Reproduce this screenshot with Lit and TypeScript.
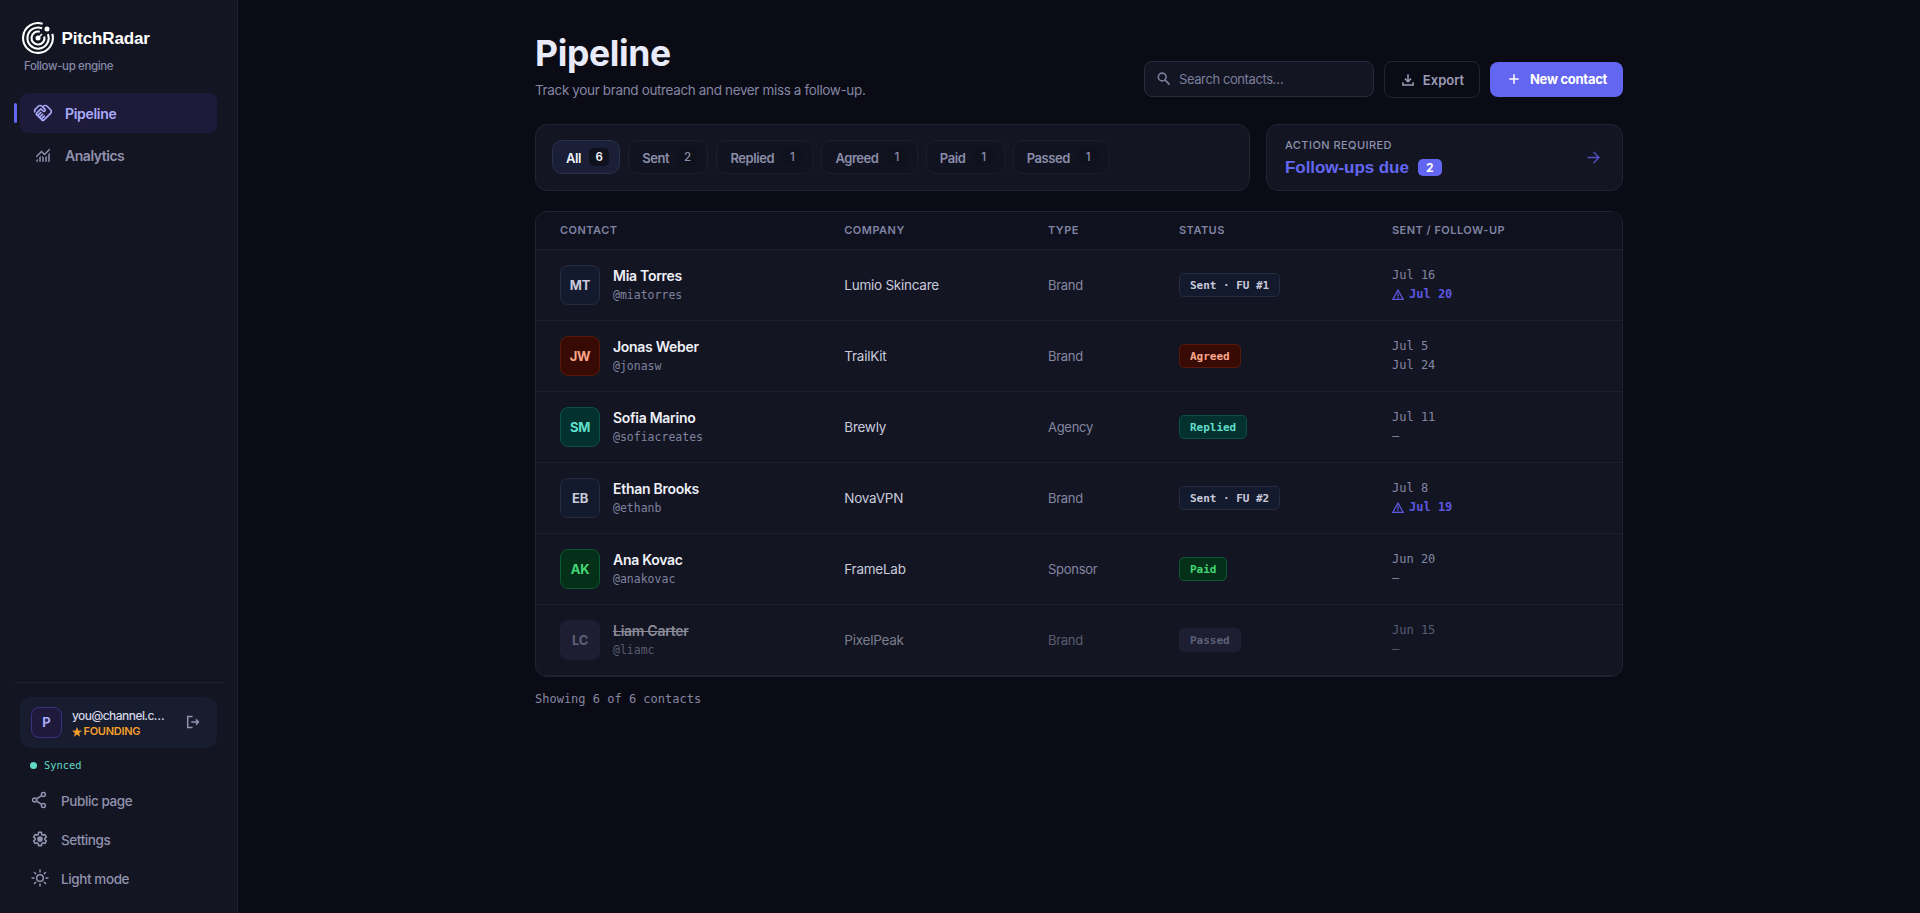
import { LitElement, html, css, svg, nothing, TemplateResult } from 'lit';
import { customElement, state } from 'lit/decorators.js';
import { classMap } from 'lit/directives/class-map.js';

type Tone = 'sent' | 'agreed' | 'replied' | 'paid' | 'passed';

interface Contact {
  initials: string;
  name: string;
  handle: string;
  company: string;
  type: string;
  status: string;
  tone: Tone;
  sent: string;
  followUp: string;
  due?: boolean;
}

const CONTACTS: Contact[] = [
  { initials: 'MT', name: 'Mia Torres', handle: '@miatorres', company: 'Lumio Skincare', type: 'Brand', status: 'Sent · FU #1', tone: 'sent', sent: 'Jul 16', followUp: 'Jul 20', due: true },
  { initials: 'JW', name: 'Jonas Weber', handle: '@jonasw', company: 'TrailKit', type: 'Brand', status: 'Agreed', tone: 'agreed', sent: 'Jul 5', followUp: 'Jul 24' },
  { initials: 'SM', name: 'Sofia Marino', handle: '@sofiacreates', company: 'Brewly', type: 'Agency', status: 'Replied', tone: 'replied', sent: 'Jul 11', followUp: '—' },
  { initials: 'EB', name: 'Ethan Brooks', handle: '@ethanb', company: 'NovaVPN', type: 'Brand', status: 'Sent · FU #2', tone: 'sent', sent: 'Jul 8', followUp: 'Jul 19', due: true },
  { initials: 'AK', name: 'Ana Kovac', handle: '@anakovac', company: 'FrameLab', type: 'Sponsor', status: 'Paid', tone: 'paid', sent: 'Jun 20', followUp: '—' },
  { initials: 'LC', name: 'Liam Carter', handle: '@liamc', company: 'PixelPeak', type: 'Brand', status: 'Passed', tone: 'passed', sent: 'Jun 15', followUp: '—' },
];

const FILTERS: [string, number][] = [['All', 6], ['Sent', 2], ['Replied', 1], ['Agreed', 1], ['Paid', 1], ['Passed', 1]];

const icon = (size: number, box: string, body: TemplateResult) =>
  html`<svg width=${size} height=${size} viewBox=${box} fill="none" stroke="none" aria-hidden="true">${body}</svg>`;

const handshake = icon(20, '0 0 24 24', svg`<path fill="currentColor" d="M12.22 19.85c-.18.18-.5.21-.71 0-.18-.18-.21-.5 0-.71l3.39-3.39-1.41-1.41-3.39 3.39c-.19.2-.51.19-.71 0-.21-.21-.18-.53 0-.71l3.39-3.39-1.41-1.41-3.39 3.39c-.18.18-.5.21-.71 0-.19-.19-.19-.51 0-.71l3.39-3.39-1.42-1.41-3.39 3.39c-.18.18-.5.21-.71 0-.19-.2-.19-.51 0-.71L9.52 8.4l1.87 1.86c.95.95 2.59.94 3.54 0 .98-.98.98-2.56 0-3.54l-1.86-1.86.28-.28c.78-.78 2.05-.78 2.83 0l4.24 4.24c.78.78.78 2.05 0 2.83l-8.2 8.2zm9.61-6.78c1.56-1.56 1.56-4.09 0-5.66l-4.24-4.24c-1.56-1.56-4.09-1.56-5.66 0l-.28.28-.28-.28c-1.56-1.56-4.09-1.56-5.66 0L2.17 6.71C.75 8.13.62 10.34 1.77 11.9l1.45-1.45c-.39-.75-.26-1.7.37-2.33l3.54-3.54c.78-.78 2.05-.78 2.83 0l3.56 3.56c.18.18.21.5 0 .71-.21.21-.53.18-.71 0L9.52 5.57l-5.8 5.79c-.98.97-.98 2.56 0 3.54.39.39.89.63 1.42.7.07.52.3 1.02.7 1.42.4.4.9.63 1.42.7.07.52.3 1.02.7 1.42.4.4.9.63 1.42.7.07.54.31 1.03.7 1.42.47.47 1.1.73 1.77.73.67 0 1.3-.26 1.77-.73l8.21-8.19z"/>`);
const chart = icon(18, '0 -960 960 960', svg`<path fill="currentColor" d="M120-120v-80l80-80v160h-80Zm160 0v-240l80-80v320h-80Zm160 0v-320l80 81v239h-80Zm160 0v-239l80-80v319h-80Zm160 0v-400l80-80v480h-80ZM120-327v-113l280-280 160 160 280-280v113L560-447 400-607 120-327Z"/>`);
const share = icon(18, '0 0 18 18', svg`<g stroke="currentColor" stroke-width="1.5"><circle cx="3.6" cy="9" r="2"/><circle cx="12.4" cy="3.6" r="2"/><circle cx="12.4" cy="14.4" r="2"/><path d="M5.400 8l5.300-3.300M5.400 10l5.300 3.300"/></g>`);
const gear = icon(18, '0 0 24 24', svg`<path stroke="currentColor" stroke-width="2.1" stroke-linejoin="round" d="M18.4 12.9c.1-.6.1-1.2 0-1.8l2.1-1.6-2-3.5-2.5 1c-.5-.4-1-.7-1.6-.9L14 3.2h-4l-.4 2.9c-.6.2-1.100.5-1.600.9l-2.500-1-2 3.500 2.100 1.600c-.1.600-.1 1.200 0 1.800l-2.100 1.600 2 3.500 2.500-1c.5.4 1 .7 1.600.9l.4 2.900h4l.4-2.900c.6-.2 1.100-.5 1.600-.9l2.500 1 2-3.500z"/><circle cx="12" cy="12" r="3.800" fill="currentColor"/>`);
const sun = icon(18, '0 0 18 18', svg`<g stroke="currentColor" stroke-width="1.5" stroke-linecap="round"><circle cx="9" cy="9" r="3.300"/><path d="M9 1.100v2M9 14.900v2M1.100 9h2M14.900 9h2M3.500 3.500l1.200 1.200M13.300 13.300l1.200 1.200M3.500 14.500l1.200-1.200M13.300 4.700l1.200-1.200"/></g>`);
const logout = icon(14, '0 0 14 14', svg`<path stroke="currentColor" stroke-width="1.500" d="M6.500 1.600H1.700v10.800h4.800M5.300 7h7M9.900 4.400L12.500 7l-2.600 2.600"/>`);
const magnifier = icon(14, '0 0 14 14', svg`<g stroke="currentColor" stroke-width="1.600"><circle cx="5.200" cy="5" r="3.900"/><path d="M8 7.900l4.600 4.700"/></g>`);
const download = icon(12, '0 0 12 12', svg`<path stroke="currentColor" stroke-width="1.500" d="M6 .3v7M2.900 4.600L6 7.700l3.100-3.100M.9 8.300v2.600h10.200V8.300"/>`);
const plus = icon(10, '0 0 10 10', svg`<path stroke="currentColor" stroke-width="1.500" d="M5 .3v9.400M.3 5h9.400"/>`);
const arrow = icon(13, '0 0 13 13', svg`<path stroke="currentColor" stroke-width="1.400" d="M.5 6.500h11.300M6.500 1l5.500 5.500L6.500 12"/>`);
const star = icon(10, '0 0 24 24', svg`<path fill="currentColor" d="M12 0l3.200 8.300 8.800.5-6.900 5.600 2.300 8.700L12 18.200l-7.400 4.900 2.300-8.700L0 8.800l8.800-.5z"/>`);
const warning = icon(12, '0 0 12 12', svg`<path stroke="currentColor" stroke-width="1.300" d="M6 1l5.100 9.300H.9zM6 4.300v3.100M6 8v1.200"/>`);
const radar = html`<svg class="radar" width="32" height="32" viewBox="0 0 32 32" fill="none" aria-hidden="true">
  <g stroke="#fff" stroke-width="2.100">
    <path d="M20.600 1.850A14.900 14.900 0 1 0 30.300 11.900"/>
    <path d="M20.100 6.300A10.600 10.600 0 1 0 25.900 12.200"/>
    <path d="M17.800 9.800A6.500 6.500 0 1 0 22.300 14.400"/>
    <path d="M17 15L20 12" stroke-width="1.500"/>
  </g>
  <circle cx="16" cy="16" r="2.500" fill="#fff"/>
  <circle cx="25" cy="7" r="2.500" fill="#fff"/>
</svg>`;

@customElement('pr-sidebar')
class Sidebar extends LitElement {
  static styles = css`
    :host {
      display: flex; flex-direction: column; box-sizing: border-box; width: 238px; height: 913px;
      padding: 22px 12px 15px 12px; background: #131522; border-right: 1px solid #222434;
      font-family: Inter, sans-serif; color: #9092ae;
    }
    svg { display: block; flex: none; }
    .brand { display: flex; align-items: center; gap: 7.500px; padding-left: 10px; height: 32px; }
    .word { padding-top: 1.500px; font: 700 17px/32px 'Liberation Sans', sans-serif; letter-spacing: -0.16px; color: #fff; }
    .tag { padding-left: 12px; margin-top: 4px; font-size: 11.5px; line-height: 17px; font-weight: 450; letter-spacing: -0.37px; color: #8588a8; }
    nav { display: flex; flex-direction: column; gap: 2px; margin: 18px 8px 0; }
    .item { position: relative; display: flex; align-items: center; box-sizing: border-box; height: 40px; border-radius: 8px; padding-left: 13px; font-size: 14px; font-weight: 600; letter-spacing: -0.46px; }
    .item .ico { display: flex; justify-content: center; width: 20px; margin-right: 12px; }
    .item.on { background: #1e1a3a; color: #a9abfa; letter-spacing: -0.3px; }
    .item.on::before { content: ''; position: absolute; left: -6px; top: 10px; width: 3px; height: 20px; border-radius: 2px; background: #6366f1; }
    .rule { margin: auto 1px 0 2px; height: 1px; background: #1f2131; }
    .foot { padding: 14px 8px 0; }
    .user { display: flex; align-items: center; height: 51px; border-radius: 11px; background: #181c2f; padding: 0 17px 0 11px; }
    .avatar { box-sizing: border-box; width: 31px; height: 31px; border: 1px solid #3a3080; border-radius: 8px; background: #1f1a3b; color: #a9abfa; display: grid; place-items: center; font-size: 13px; font-weight: 700; }
    .who { margin-left: 10px; padding-top: 3px; flex: 1; min-width: 0; }
    .mail { font-size: 12px; line-height: 16px; font-weight: 500; letter-spacing: -0.55px; color: #d3d5e6; white-space: nowrap; }
    .plan { display: flex; align-items: center; gap: 1.500px; font-size: 11px; line-height: 15px; font-weight: 600; letter-spacing: -0.28px; color: #f59e2b; }
    .sync { display: flex; align-items: center; gap: 7px; padding-left: 10px; height: 16px; margin: 9.500px 0 8px; font: 400 10.4px/16px 'DejaVu Sans Mono', monospace; color: #5fd9c4; }
    .dot { width: 7px; height: 7px; border-radius: 50%; background: #5fd9c4; }
    .link { display: flex; align-items: center; gap: 12.500px; height: 39px; padding-left: 10.5px; font-size: 13.5px; font-weight: 450; letter-spacing: -0.4px; }
    .link svg { margin-bottom: 1px; }
    .link span { padding-top: 1px; }
  `;
  render() {
    return html`
      <div class="brand">${radar}<span class="word">PitchRadar</span></div>
      <div class="tag">Follow-up engine</div>
      <nav>
        <div class="item on"><span class="ico">${handshake}</span>Pipeline</div>
        <div class="item"><span class="ico">${chart}</span>Analytics</div>
      </nav>
      <div class="rule"></div>
      <div class="foot">
        <div class="user">
          <div class="avatar">P</div>
          <div class="who"><div class="mail">you@channel.c…</div><div class="plan">${star}FOUNDING</div></div>
          ${logout}
        </div>
        <div class="sync"><i class="dot"></i>Synced</div>
        <div class="link">${share}<span>Public page</span></div>
        <div class="link">${gear}<span>Settings</span></div>
        <div class="link">${sun}<span>Light mode</span></div>
      </div>`;
  }
}

@customElement('app-root')
class AppRoot extends LitElement {
  @state() private active = 'All';

  static styles = css`
    :host { display: flex; height: 913px; background: #0a0b14; color: #8f91ad; font-family: Inter, sans-serif; overflow: hidden; }
    svg { display: block; flex: none; }
    main { flex: 1; display: flex; flex-direction: column; align-items: center; padding-top: 34px; }
    .page { width: 1088px; }
    header { display: flex; justify-content: space-between; align-items: flex-end; height: 66px; }
    h1 { margin: 0; font-size: 35.5px; line-height: 40px; font-weight: 700; letter-spacing: -0.35px; color: #e9eafa; }
    .lead { margin-top: 6px; font-size: 13.5px; line-height: 20px; letter-spacing: -0.36px; color: #8486a4; }
    .tools { display: flex; align-items: flex-start; margin-bottom: 2px; height: 37px; }
    .search { box-sizing: border-box; display: flex; align-items: center; gap: 8px; width: 230px; height: 36px; border: 1px solid #292c3e; border-radius: 8px; background: #131523; padding-left: 12px; font-size: 13px; letter-spacing: -0.41px; color: #7b7e9a; }
    .btn { box-sizing: border-box; display: flex; align-items: center; justify-content: center; font-size: 13px; font-weight: 600; border-radius: 8px; }
    .ghost { width: 96px; height: 37px; margin-left: 10px; border: 1px solid #222433; gap: 9px; padding-left: 2px; color: #9b9db6; }
    .primary { width: 133px; height: 35px; margin: 1px 0 0 10px; padding: 0 0 1px 3px; background: #6366f1; color: #fff; gap: 11px; letter-spacing: -0.28px; font-weight: 700; }
    .strip { display: grid; grid-template-columns: 1fr 357px; gap: 16px; margin-top: 24px; }
    .card { box-sizing: border-box; height: 67px; border: 1px solid #212333; border-radius: 12px; background: #131523; }
    .filters { display: flex; align-items: center; gap: 8px; padding: 0 0 1px 16px; }
    .chip { box-sizing: border-box; display: flex; align-items: center; gap: 8.300px; height: 34px; border: 1px solid #1c1e2e; border-radius: 10px; padding: 1px 10px 0 13px; background: #111320; font-size: 13px; font-weight: 600; letter-spacing: -0.44px; color: #8b8da9; }
    .count { display: grid; place-items: center; width: 20px; height: 18px; margin-bottom: 1px; border-radius: 5px; background: #0f111d; font-size: 11.5px; font-weight: 500; letter-spacing: 0; }
    .chip.on { background: #1a1e36; border-color: #2b3049; color: #f0f1fb; }
    .chip.on .count { background: #0f111d; font-weight: 600; }
    .action { display: flex; align-items: center; justify-content: space-between; padding: 0 22px 0 18px; color: #5052c4; }
    .kicker { font-size: 11px; line-height: 16px; font-weight: 550; letter-spacing: 0.44px; color: #8f91ad; }
    .due { display: flex; align-items: center; margin-top: 4px; gap: 9px; height: 22px; font: 700 17px/22px 'Liberation Sans', sans-serif; letter-spacing: -0.06px; color: #6366f1; }
    .pill { width: 24px; height: 17px; margin-bottom: 1px; border-radius: 5px; background: #6366f1; color: #fff; font: 700 12px/17px Inter, sans-serif; text-align: center; }
    .table { margin-top: 20px; border: 1px solid #212333; border-radius: 12px; background: #131523; overflow: hidden; }
    .row { box-sizing: border-box; display: grid; grid-template-columns: 284.3px 203.7px 131px 213px 1fr; align-items: center; height: 71px; padding: 0 24px; border-bottom: 1px solid #1e2030; }
    .head { height: 38px; padding-bottom: 1px; background: #0f111e; font-size: 11px; font-weight: 600; letter-spacing: 0.47px; color: #8083a2; }
    .contact { display: flex; align-items: center; gap: 13px; }
    .avatar { box-sizing: border-box; width: 40px; height: 40px; border: 1px solid; border-radius: 8px; display: grid; place-items: center; font-size: 13px; font-weight: 700; letter-spacing: -0.2px; }
    .name { margin-bottom: 2px; font-size: 14px; line-height: 18px; font-weight: 600; letter-spacing: -0.28px; color: #eff0f8; }
    .handle { font: 400 11.5px/17px 'DejaVu Sans Mono', monospace; color: #7f829e; }
    .company { font-size: 13.5px; letter-spacing: -0.25px; color: #c8cadb; }
    .type { font-size: 13px; letter-spacing: -0.28px; color: #8486a0; }
    .badge { display: block; width: max-content; box-sizing: border-box; height: 24px; border: 1px solid; border-radius: 5px; padding: 0 10px; font: 700 11px/23px 'DejaVu Sans Mono', monospace; letter-spacing: -0.02px; white-space: pre; }
    .sent { background: #141a2d; border-color: #262b40; color: #c8cadb; }
    .agreed { background: #370b03; border-color: #57190c; color: #fda58c; }
    .replied { background: #03312e; border-color: #0a4f48; color: #5fdfcb; }
    .paid { background: #04301a; border-color: #0c5a33; color: #45d674; }
    .passed { background: #1d1e31; border-color: #1d1e31; color: #5e6078; }
    .dates { font: 400 12px/19px 'DejaVu Sans Mono', monospace; color: #8587a2; }
    .late { display: flex; align-items: center; gap: 5px; font-weight: 700; color: #5d57e0; }
    .muted .name { color: #8a8b97; text-decoration: line-through; }
    .muted .handle, .muted .type, .muted .dates { color: #595c70; }
    .muted .company { color: #7b7d8c; }
    .summary { margin-top: 13px; font: 400 12px/18px 'DejaVu Sans Mono', monospace; color: #8587a2; }
  `;

  private row(c: Contact) {
    return html`<div class=${classMap({ row: true, muted: c.tone === 'passed' })}>
      <div class="contact">
        <div class="avatar ${c.tone}">${c.initials}</div>
        <div><div class="name">${c.name}</div><div class="handle">${c.handle}</div></div>
      </div>
      <div class="company">${c.company}</div>
      <div class="type">${c.type}</div>
      <div><span class="badge ${c.tone}">${c.status}</span></div>
      <div class="dates"><div>${c.sent}</div><div class=${classMap({ late: !!c.due })}>${c.due ? warning : nothing}${c.followUp}</div></div>
    </div>`;
  }

  render() {
    return html`<pr-sidebar></pr-sidebar>
      <main><div class="page">
        <header>
          <div><h1>Pipeline</h1><div class="lead">Track your brand outreach and never miss a follow-up.</div></div>
          <div class="tools">
            <div class="search">${magnifier}<span>Search contacts…</span></div>
            <div class="btn ghost">${download}<span>Export</span></div>
            <div class="btn primary">${plus}<span>New contact</span></div>
          </div>
        </header>
        <section class="strip">
          <div class="card filters">${FILTERS.map(([label, n]) => html`
            <div class=${classMap({ chip: true, on: label === this.active })} @click=${() => (this.active = label)}>${label}<span class="count">${n}</span></div>`)}</div>
          <div class="card action">
            <div><div class="kicker">ACTION REQUIRED</div><div class="due">Follow-ups due<span class="pill">2</span></div></div>
            ${arrow}
          </div>
        </section>
        <section class="table">
          <div class="row head"><span>CONTACT</span><span>COMPANY</span><span>TYPE</span><span>STATUS</span><span>SENT / FOLLOW-UP</span></div>
          ${CONTACTS.map((c) => this.row(c))}
        </section>
        <div class="summary">Showing 6 of 6 contacts</div>
      </div></main>`;
  }
}
